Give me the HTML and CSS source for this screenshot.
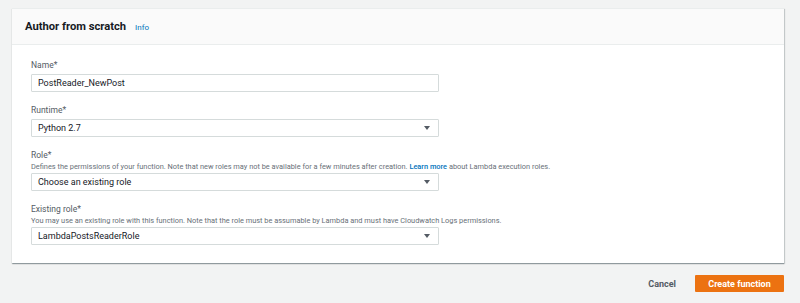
FILE: index.html
```html
<!DOCTYPE html>
<html lang="en">
<head>
<meta charset="UTF-8">
<title>Create function</title>
<link rel="stylesheet" href="styles.css">
</head>
<body>

<div class="panel">
<div class="panel-header">
<span class="panel-title">Author from scratch</span>
<a class="info-link" href="#">Info</a>
</div>

<div class="panel-body">
<div class="field">
<label class="field-label">Name*</label>
<div class="input-box">PostReader_NewPost</div>
</div>

<div class="field">
<label class="field-label">Runtime*</label>
<div class="input-box select">Python 2.7<span class="caret"></span></div>
</div>

<div class="field">
<label class="field-label">Role*</label>
<div class="field-desc">Defines the permissions of your function. Note that new roles may not be available for a few minutes after creation. <a href="#">Learn more</a> about Lambda execution roles.</div>
<div class="input-box select">Choose an existing role<span class="caret"></span></div>
</div>

<div class="field">
<label class="field-label">Existing role*</label>
<div class="field-desc">You may use an existing role with this function. Note that the role must be assumable by Lambda and must have Cloudwatch Logs permissions.</div>
<div class="input-box select">LambdaPostsReaderRole<span class="caret"></span></div>
</div>
</div>
</div>

<div class="actions">
<button class="btn-cancel">Cancel</button>
<button class="btn-primary">Create function</button>
</div>

</body>
</html>
```

FILE: styles.css
```css
* {
margin: 0;
padding: 0;
box-sizing: border-box;
font-family: Roboto, "Liberation Sans", Arial, sans-serif;
}

body {
background-color: #f2f3f3;
color: #16191f;
padding: 8px 16px 0 12px;
}

.panel {
background: #fff;
box-shadow: 0 1px 1px rgba(0, 28, 36, 0.3), 1px 1px 1px rgba(0, 28, 36, 0.15);
border-top: 1px solid #eaeded;
}

.panel-header {
height: 36px;
background: #fafafa;
border-bottom: 1px solid #eaeded;
display: flex;
align-items: center;
padding-left: 13px;
}

.panel-title {
font-size: 11.2px;
font-weight: bold;
color: #16191f;
}

.info-link {
font-size: 8px;
color: #0073bb;
text-decoration: none;
margin-left: 9px;
margin-top: 2px;
}

.panel-body {
padding: 15px 19px 18px;
display: flex;
flex-direction: column;
gap: 13px;
}

.field {
width: 408px;
}

.field-label {
display: block;
font-size: 8.5px;
line-height: 11px;
color: #545b64;
margin-bottom: 3px;
}

.field-desc {
font-size: 7.4px;
line-height: 9px;
color: #687078;
white-space: nowrap;
margin-top: -2px;
margin-bottom: 2px;
}

.field-desc a {
color: #0073bb;
font-weight: 500;
text-decoration: none;
}

.input-box {
height: 18px;
border: 1px solid #d5dbdb;
border-radius: 1px;
font-size: 9px;
line-height: 16px;
padding-left: 6px;
color: #16191f;
position: relative;
}

.caret {
position: absolute;
right: 8px;
top: 6px;
width: 0;
height: 0;
border-left: 3.5px solid transparent;
border-right: 3.5px solid transparent;
border-top: 4px solid #545b64;
}

.actions {
display: flex;
justify-content: flex-end;
align-items: center;
margin-top: 12px;
gap: 12px;
}

.btn-cancel {
background: none;
border: none;
font-size: 9px;
font-weight: bold;
color: #545b64;
padding: 0 7px;
cursor: pointer;
}

.btn-primary {
width: 89px;
height: 17px;
background: #ec7211;
border: none;
border-radius: 1px;
color: #fff;
font-size: 9px;
font-weight: bold;
cursor: pointer;
}
```
